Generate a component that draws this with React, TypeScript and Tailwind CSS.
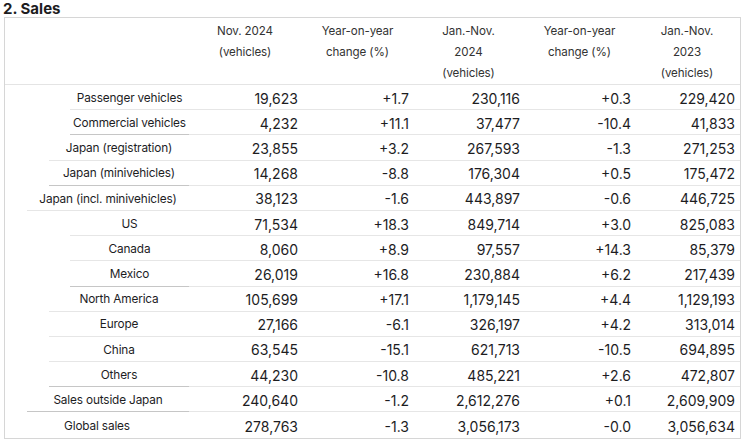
import React from 'react';

type Row = {
  label: string;
  level: number; // 0 = widest label cell, 3 = most indented
  groupEnd?: boolean;
  values: string[];
};

const rows: Row[] = [
  { label: "Passenger vehicles", level: 3, values: ["19,623", "+1.7", "230,116", "+0.3", "229,420"] },
  { label: "Commercial vehicles", level: 3, groupEnd: true, values: ["4,232", "+11.1", "37,477", "-10.4", "41,833"] },
  { label: "Japan (registration)", level: 2, values: ["23,855", "+3.2", "267,593", "-1.3", "271,253"] },
  { label: "Japan (minivehicles)", level: 2, groupEnd: true, values: ["14,268", "-8.8", "176,304", "+0.5", "175,472"] },
  { label: "Japan (incl. minivehicles)", level: 1, values: ["38,123", "-1.6", "443,897", "-0.6", "446,725"] },
  { label: "US", level: 3, values: ["71,534", "+18.3", "849,714", "+3.0", "825,083"] },
  { label: "Canada", level: 3, values: ["8,060", "+8.9", "97,557", "+14.3", "85,379"] },
  { label: "Mexico", level: 3, groupEnd: true, values: ["26,019", "+16.8", "230,884", "+6.2", "217,439"] },
  { label: "North America", level: 2, values: ["105,699", "+17.1", "1,179,145", "+4.4", "1,129,193"] },
  { label: "Europe", level: 2, values: ["27,166", "-6.1", "326,197", "+4.2", "313,014"] },
  { label: "China", level: 2, values: ["63,545", "-15.1", "621,713", "-10.5", "694,895"] },
  { label: "Others", level: 2, groupEnd: true, values: ["44,230", "-10.8", "485,221", "+2.6", "472,807"] },
  { label: "Sales outside Japan", level: 1, groupEnd: true, values: ["240,640", "-1.2", "2,612,276", "+0.1", "2,609,909"] },
  { label: "Global sales", level: 0, values: ["278,763", "-1.3", "3,056,173", "-0.0", "3,056,634"] },
];

const spacerWidth = ["w-0", "w-[22px]", "w-[44px]", "w-[65px]"];
const dataWidth = ["w-[114px]", "w-[111px]", "w-[111px]", "w-[111px]", "w-[104px]"];

const headers = [
  ["Nov. 2024", "(vehicles)"],
  ["Year-on-year", "change (%)"],
  ["Jan.-Nov.", "2024", "(vehicles)"],
  ["Year-on-year", "change (%)"],
  ["Jan.-Nov.", "2023", "(vehicles)"],
];

const App = () => {
  return (
    <div className="w-[744px] h-[441px] bg-white overflow-hidden text-[#1d1d1f] font-['Inter','Liberation_Sans',sans-serif]">
      <div className="h-[17px] pl-[3px] text-[15px] leading-[17px] font-bold">2. Sales</div>

      <div className="ml-[4px] w-[737px] border border-[#d6d6d6]">
        {/* Header */}
        <div className="flex h-[67px] border-b border-[#e4e4e4]">
          <div className="w-[183px] shrink-0" />
          {headers.map((lines, i) => (
            <div key={i} className={`${dataWidth[i]} shrink-0 pt-[3px] text-center text-[11.6px] tracking-[-0.1px] leading-[21px] text-[#333]`}>
              {lines.map((l, j) => (
                <div key={j} className="whitespace-nowrap">{l}</div>
              ))}
            </div>
          ))}
        </div>

        {/* Body */}
        {rows.map((row, idx) => {
          const last = idx === rows.length - 1;
          const labelBorder = last ? "" : row.groupEnd ? "border-b border-[#c6c6c6]" : "border-b border-[#e6e6e6]";
          const dataBorder = last ? "" : "border-b border-[#e6e6e6]";
          return (
            <div key={idx} className="flex h-[25.2px]">
              <div className={`${spacerWidth[row.level]} shrink-0`} />
              <div className={`flex-1 flex items-center justify-center pt-[3px] whitespace-nowrap text-[11.8px] tracking-[-0.15px] ${labelBorder}`}>
                {row.label}
              </div>
              {row.values.map((v, j) => (
                <div key={j} className={`${dataWidth[j]} shrink-0 flex items-center justify-end pt-[2px] pr-[5px] text-[14px] ${dataBorder}`}>
                  {v}
                </div>
              ))}
            </div>
          );
        })}
      </div>
    </div>
  );
};

export default App;
